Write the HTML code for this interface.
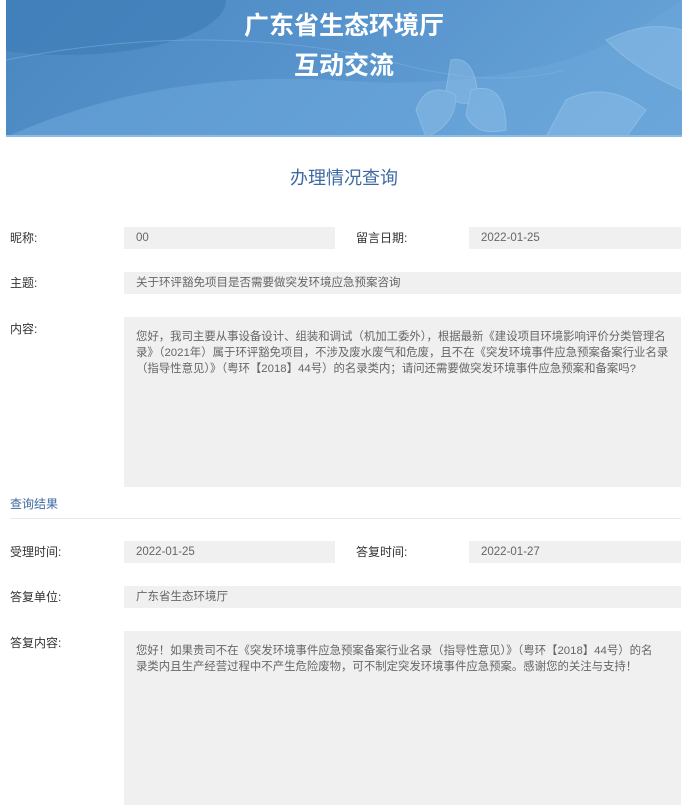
<!DOCTYPE html>
<html><head><meta charset="utf-8"><style>
*{margin:0;padding:0;box-sizing:border-box}
body{width:688px;height:805px;overflow:hidden;background:#fff;font-family:"Liberation Sans","Noto Sans CJK SC",sans-serif;font-size:12px;color:#333;position:relative}
.banner{position:absolute;left:6px;top:0;width:676px;height:137px;background:linear-gradient(135deg,#4a86c0 0%,#5592cb 40%,#6aa6d8 100%);overflow:hidden;border-bottom:2px solid #8cbde6}
.banner .t{position:absolute;left:0;width:100%;text-align:center;color:#fff;font-weight:bold;font-size:25px;font-family:"Noto Sans CJK SC",sans-serif}
.a{position:absolute;color:#333;line-height:16px}
.b{position:absolute;background:#f0f0f0;color:#666;padding-left:12px;line-height:22px;font-size:11.5px}
.m{padding:12px 2px 0 12px;line-height:16px;font-size:11.4px}
</style></head><body>
<div class="banner">
<svg width="676" height="137" style="position:absolute;left:0;top:0">
<ellipse cx="60" cy="0" rx="160" ry="55" fill="#3f7db8" opacity=".7"/>
<path d="M0 137 Q150 70 330 80 Q450 90 560 60 Q620 40 676 0 L676 137Z" fill="#6aa7da" opacity=".6"/>
<path d="M0 60 Q200 20 380 60 Q480 90 560 70" stroke="#7fb3e0" stroke-width="1" fill="none" opacity=".5"/>
<g fill="#8fc0ea" opacity=".45" stroke="#b6d8f4" stroke-width="1">
<path d="M445 60 Q470 55 472 100 Q450 110 440 90Z"/>
<path d="M465 90 Q500 80 500 130 Q470 137 460 115Z"/>
<path d="M410 110 Q420 80 450 95 Q450 125 420 137Z"/>
<path d="M600 40 Q640 20 676 30 L676 90 Q630 70 600 40Z"/>
<path d="M560 100 Q600 80 640 110 L620 137 L540 137Z"/>
</g>
</svg>
<div class="t" style="top:6px">广东省生态环境厅</div>
<div class="t" style="top:46px">互动交流</div>
</div>
<div class="a" style="left:0;width:688px;top:167px;text-align:center;font-size:18px;line-height:22px;color:#3d6aa3">办理情况查询</div>

<div class="a" style="left:10px;top:230px">昵称:</div>
<div class="b" style="left:124px;top:227px;width:211px">00</div>
<div class="a" style="left:356px;top:230px">留言日期:</div>
<div class="b" style="left:469px;top:227px;width:212px">2022-01-25</div>

<div class="a" style="left:10px;top:275px">主题:</div>
<div class="b" style="left:124px;top:272px;width:557px">关于环评豁免项目是否需要做突发环境应急预案咨询</div>

<div class="a" style="left:10px;top:321px">内容:</div>
<div class="b m" style="left:124px;top:317px;width:557px;height:170px">您好，我司主要从事设备设计、组装和调试（机加工委外），根据最新《建设项目环境影响评价分类管理名录》（2021年）属于环评豁免项目，不涉及废水废气和危废，且不在《突发环境事件应急预案备案行业名录（指导性意见）》（粤环【2018】44号）的名录类内；请问还需要做突发环境事件应急预案和备案吗?</div>

<div class="a" style="left:10px;top:496px;color:#3d6aa3">查询结果</div>
<div style="position:absolute;left:10px;top:518px;width:671px;height:1px;background:#e8e8e8"></div>

<div class="a" style="left:10px;top:544px">受理时间:</div>
<div class="b" style="left:124px;top:541px;width:211px">2022-01-25</div>
<div class="a" style="left:356px;top:544px">答复时间:</div>
<div class="b" style="left:469px;top:541px;width:212px">2022-01-27</div>

<div class="a" style="left:10px;top:589px">答复单位:</div>
<div class="b" style="left:124px;top:586px;width:557px">广东省生态环境厅</div>

<div class="a" style="left:10px;top:635px">答复内容:</div>
<div class="b m" style="left:124px;top:631px;width:557px;height:174px;padding-right:18px">您好！如果贵司不在《突发环境事件应急预案备案行业名录（指导性意见）》（粤环【2018】44号）的名录类内且生产经营过程中不产生危险废物，可不制定突发环境事件应急预案。感谢您的关注与支持！</div>
</body></html>
